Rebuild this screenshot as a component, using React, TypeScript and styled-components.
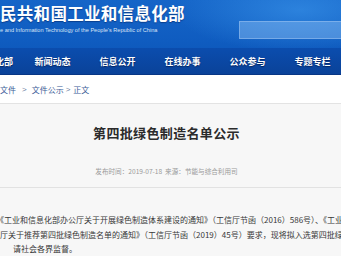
import React, { FC } from "react";
import styled, { createGlobalStyle } from "styled-components";

const GlobalStyle = createGlobalStyle`
  html, body {
    margin: 0;
    padding: 0;
    background: #ffffff;
    overflow: hidden;
  }
  body {
    font-family: "Noto Sans CJK SC", "Noto Sans", sans-serif;
  }
`;

const Page = styled.div`
  width: 341px;
  height: 256px;
  overflow: hidden;
  background: #f7f7f7;
`;

const Header = styled.header`
  overflow: hidden;
  background: radial-gradient(ellipse 180px 60px at 300px 10px, rgba(64, 156, 240, 0.55), transparent 70%),
    linear-gradient(180deg, #1565c8 0%, #0f5cc0 55%, #0b52b3 100%);
`;

const TopBar = styled.div`
  height: 48px;
  display: flex;
  justify-content: space-between;
  align-items: flex-start;
`;

const Brand = styled.div`
  display: flex;
  flex-direction: column;
  padding-top: 4px;
  white-space: nowrap;
`;

const BrandTitle = styled.div`
  font-size: 16.5px;
  line-height: 18px;
  font-weight: 700;
  letter-spacing: 0.3px;
  color: #ffffff;
  text-shadow: 0 1px 1px rgba(0, 30, 90, 0.5);
`;

const BrandSub = styled.div`
  margin-top: 4px;
  font-family: "Liberation Sans", Arial, sans-serif;
  font-size: 5.6px;
  line-height: 8px;
  color: #d6e4f7;
`;

const SearchBox = styled.div`
  flex-shrink: 0;
  width: 122px;
  height: 18px;
  margin-top: 21px;
  margin-right: -20px;
  box-sizing: border-box;
  background: rgba(140, 190, 245, 0.45);
  border: 1px solid rgba(170, 205, 245, 0.45);
`;

const Nav = styled.nav`
  display: flex;
  height: 27px;
  background: linear-gradient(180deg, #0b4dae 0%, #0a4299 100%);
  border-bottom: 1px solid #083685;
  box-sizing: border-box;
`;

const NavItem = styled.a<{ $lead?: boolean }>`
  flex-shrink: 0;
  display: flex;
  justify-content: ${(p) => (p.$lead ? "flex-end" : "center")};
  width: ${(p) => (p.$lead ? "20px" : "65px")};
  padding-right: ${(p) => (p.$lead ? "7px" : "0")};
  padding-top: 3px;
  box-sizing: border-box;
  font-size: 9px;
  line-height: 22px;
  font-weight: 700;
  color: #ffffff;
  white-space: nowrap;
  text-shadow: 0 1px 1px rgba(0, 20, 70, 0.7);
`;

const Crumbs = styled.div`
  display: flex;
  align-items: center;
  height: 28px;
  background: #ffffff;
  font-size: 8px;
  color: #3b5c97;
  white-space: nowrap;
  border-bottom: 1px solid #e3e3e3;
`;

const Sep = styled.span<{ $l: number; $r: number }>`
  margin: 0 ${(p) => p.$r}px 0 ${(p) => p.$l}px;
  font-family: "Liberation Sans", Arial, sans-serif;
  color: #6b7f9f;
`;

const Article = styled.article`
  margin-left: -8px;
  width: 349px;
  background: #f7f7f7;
`;

const ArticleHead = styled.div`
  padding: 19px 0 11px;
  border-bottom: 1px solid #e2e2e2;
  text-align: center;
`;

const Title = styled.h1`
  margin: 0;
  font-size: 13px;
  line-height: 20px;
  font-weight: 700;
  letter-spacing: 0.35px;
  color: #2b2b2b;
`;

const Meta = styled.div`
  margin-top: 23px;
  font-size: 6.6px;
  line-height: 10px;
  color: #9a9a9a;
  white-space: nowrap;
`;

const Body = styled.div`
  padding-top: 25px;
`;

const Line = styled.p<{ $indent: number }>`
  margin: 0 0 0 ${(p) => p.$indent}px;
  font-size: 8px;
  line-height: 14.5px;
  color: #383838;
  white-space: nowrap;
`;

const navItems = ["新闻动态", "信息公开", "在线办事", "公众参与", "专题专栏"];

const App: FC = () => {
  return (
    <>
      <GlobalStyle />
      <Page>
        <Header>
          <TopBar>
            <Brand>
              <BrandTitle>民共和国工业和信息化部</BrandTitle>
              <BrandSub>e and Information Technology of the People's Republic of China</BrandSub>
            </Brand>
            <SearchBox />
          </TopBar>
          <Nav>
            <NavItem $lead>信息化部</NavItem>
            {navItems.map((item) => (
              <NavItem key={item}>{item}</NavItem>
            ))}
          </Nav>
        </Header>
        <Crumbs>
          <span>文件</span>
          <Sep $l={6} $r={5}>&gt;</Sep>
          <span>文件公示</span>
          <Sep $l={2} $r={3}>&gt;</Sep>
          <span>正文</span>
        </Crumbs>
        <Article>
          <ArticleHead>
            <Title>第四批绿色制造名单公示</Title>
            <Meta>发布时间：2019-07-18&nbsp;&nbsp;来源：节能与综合利用司</Meta>
          </ArticleHead>
          <Body>
            <Line $indent={4}>
              《工业和信息化部办公厅关于开展绿色制造体系建设的通知》（工信厅节函（2016）586号）、《工业和信息化部办公
            </Line>
            <Line $indent={8}>
              厅关于推荐第四批绿色制造名单的通知》（工信厅节函（2019）45号）要求，现将拟入选第四批绿色制造名单予以公示，
            </Line>
            <Line $indent={21}>请社会各界监督。</Line>
          </Body>
        </Article>
      </Page>
    </>
  );
};

export default App;
